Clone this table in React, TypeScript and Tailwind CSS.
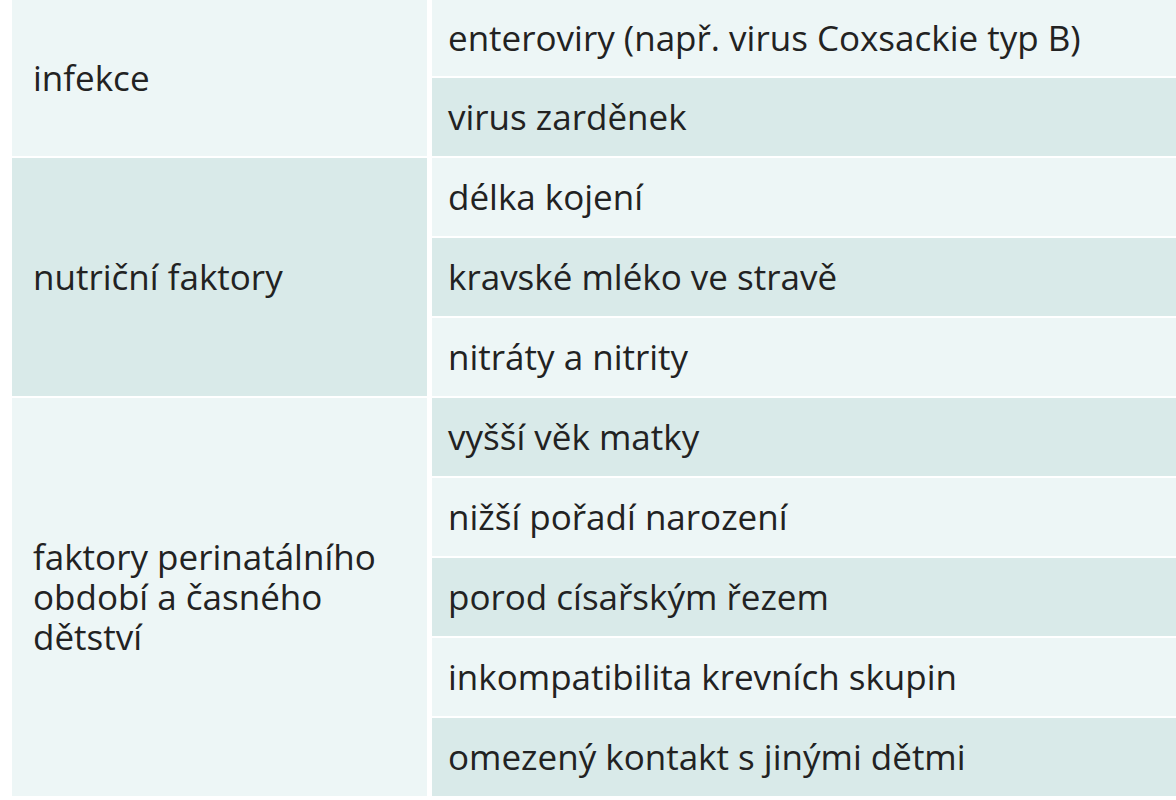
const LIGHT = 'bg-[#edf6f6]';
const DARK = 'bg-[#d9eae9]';

const groups = [
  { label: ['infekce'], items: ['enteroviry (např. virus Coxsackie typ B)', 'virus zarděnek'] },
  { label: ['nutriční faktory'], items: ['délka kojení', 'kravské mléko ve stravě', 'nitráty a nitrity'] },
  {
    label: ['faktory perinatálního', 'období a časného', 'dětství'],
    items: [
      'vyšší věk matky',
      'nižší pořadí narození',
      'porod císařským řezem',
      'inkompatibilita krevních skupin',
      'omezený kontakt s jinými dětmi',
    ],
  },
];

export default function App() {
  let rowIndex = 0;
  return (
    <div
      className="flex h-[800px] w-[1176px] flex-col gap-[2px] bg-white pl-[12px] text-[35px] text-[#222]"
      style={{ fontFamily: '"Open Sans", "Noto Sans", sans-serif' }}
    >
      {groups.map((group, gi) => {
        const rows = group.items.map((item) => {
          const i = rowIndex++;
          return (
            <div
              key={item}
              className={`flex ${i === 0 ? 'h-[76px]' : 'h-[78px]'} items-center whitespace-nowrap pl-[16px] ${i % 2 === 0 ? LIGHT : DARK}`}
            >
              {item}
            </div>
          );
        });
        return (
          <div key={gi} className="flex gap-[5px]">
            <div
              className={`flex w-[415px] shrink-0 flex-col justify-center pl-[21px] leading-[40px] ${gi % 2 === 0 ? LIGHT : DARK}`}
            >
              {group.label.map((line) => (
                <div key={line}>{line}</div>
              ))}
            </div>
            <div className="flex flex-1 flex-col gap-[2px]">{rows}</div>
          </div>
        );
      })}
    </div>
  );
}
